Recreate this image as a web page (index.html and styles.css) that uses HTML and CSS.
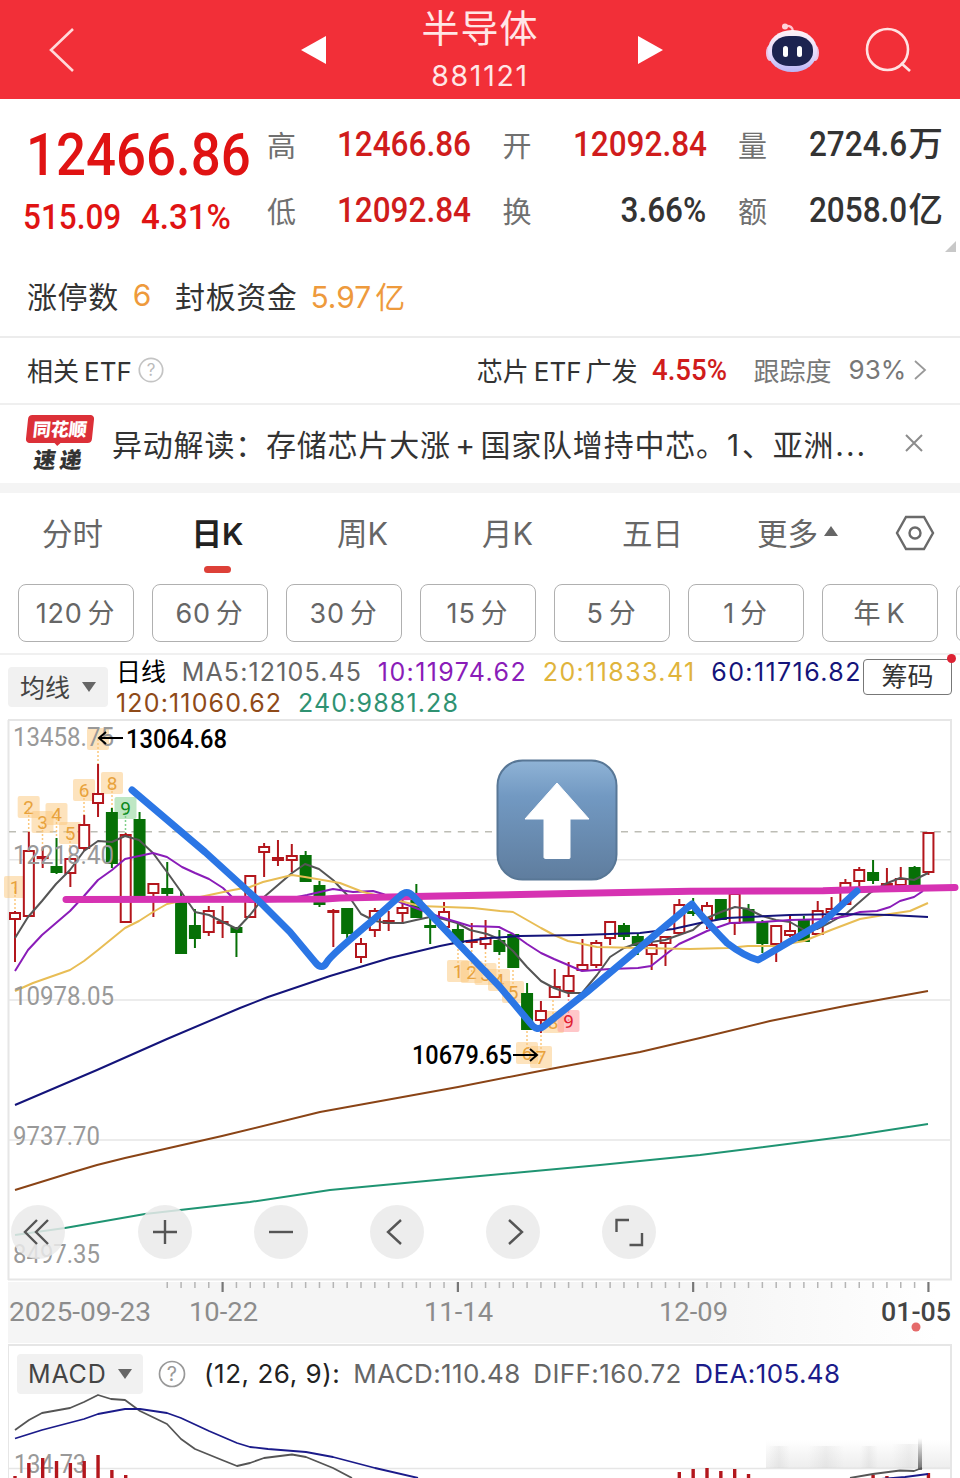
FILE: index.html
```html
<!DOCTYPE html>
<html lang="zh-CN">
<head>
    <meta charset="UTF-8">
    <meta name="viewport" content="width=device-width, initial-scale=1.0">
    <title>半导体 881121</title>
    <link rel="stylesheet" href="styles.css">
</head>
<body>
    <header class="topbar">
        <svg class="back" width="26" height="50" viewBox="0 0 26 50"><path d="M24 4 2 25l22 21" fill="none" stroke="#ffd9d9" stroke-width="2.6"/></svg>
        <svg class="prev" width="26" height="30" viewBox="0 0 26 30"><path d="M1 15 26 1v28z" fill="#fff"/></svg>
        <div class="title">
            <div class="name">半导体</div>
            <div class="code">881121</div>
        </div>
        <svg class="next" width="30" height="30" viewBox="0 0 30 30"><path d="M29 15 4 1v28z" fill="#fff"/></svg>
        <svg class="robot" width="56" height="52" viewBox="0 0 56 52">
            <defs>
                <linearGradient id="shell" x1="0" y1="0" x2="0" y2="1">
                    <stop offset="0" stop-color="#fff3f6"/>
                    <stop offset=".6" stop-color="#e3d8fb"/>
                    <stop offset="1" stop-color="#b9b6f5"/>
                </linearGradient>
            </defs>
            <path d="M20 4q8-1 8 6" fill="none" stroke="#ffc4cf" stroke-width="2.4"/>
            <circle cx="20" cy="4.500" r="3" fill="#ffd3da"/>
            <ellipse cx="5" cy="31" rx="4" ry="8" fill="#ecc5e6"/>
            <ellipse cx="50" cy="31" rx="4" ry="8" fill="#ecc5e6"/>
            <rect x="3" y="8" width="49" height="42" rx="24" ry="20" fill="url(#shell)"/>
            <rect x="7" y="14" width="41" height="30" rx="17" ry="14" fill="#1c2350"/>
            <rect x="18" y="24" width="5" height="11" rx="2.500" fill="#fff"/>
            <rect x="32" y="24" width="5" height="11" rx="2.500" fill="#fff"/>
        </svg>
        <svg class="search" width="48" height="48" viewBox="0 0 48 48"><g fill="none" stroke="#ffe2e2" stroke-width="2.6"><circle cx="22.500" cy="23.500" r="20.500"/><path d="m36 37 9 8"/></g></svg>
    </header>

    <section class="quote">
        <div class="last">
            <div class="price"><span>12466.86</span></div>
            <div class="change"><span>515.09</span><span>4.31%</span></div>
        </div>
        <dl class="stats">
            <div><dt>高</dt><dd class="red"><span>12466.86</span></dd></div>
            <div><dt>开</dt><dd class="red"><span>12092.84</span></dd></div>
            <div><dt>量</dt><dd><span>2724.6</span><b>万</b></dd></div>
            <div><dt>低</dt><dd class="red"><span>12092.84</span></dd></div>
            <div><dt>换</dt><dd><span>3.66%</span></dd></div>
            <div><dt>额</dt><dd><span>2058.0</span><b>亿</b></dd></div>
        </dl>
        <svg class="corner" width="11" height="11" viewBox="0 0 11 11"><path d="M11 0v11H0z" fill="#c8c8c8"/></svg>
    </section>

    <section class="limit">
        <span>涨停数</span><em class="count">6</em><span>封板资金</span><em class="fund">5.97<i>亿</i></em>
    </section>

    <section class="etf">
        <span>相关<i>ETF</i></span>
        <svg class="help" width="26" height="26" viewBox="0 0 26 26"><circle cx="13" cy="13" r="11.700" fill="none" stroke="#c4c4c4" stroke-width="1.700"/><text x="13" y="19" text-anchor="middle">?</text></svg>
        <span class="etf-name">芯片<i>ETF</i>广发</span>
        <span class="etf-pct"><span>4.55%</span></span>
        <span class="etf-track">跟踪度</span>
        <span class="etf-deg">93%</span>
        <svg width="16" height="20" viewBox="0 0 16 20"><path d="m3 1 10 9-10 9" fill="none" stroke="#999" stroke-width="1.800"/></svg>
    </section>

    <section class="news">
        <div class="logo">
            <div class="logo-top">同花顺</div>
            <div class="logo-bottom">速递</div>
        </div>
        <p>异动解读：存储芯片大涨<i>+</i>国家队增持中芯。<i class="num">1</i>、亚洲<i class="dots">...</i></p>
        <svg width="18" height="18" viewBox="0 0 18 18"><path d="m1 1 16 16M17 1 1 17" stroke="#8c8c8c" stroke-width="2"/></svg>
    </section>

    <nav class="tabs">
        <a>分时</a>
        <a class="active">日K</a>
        <a>周K</a>
        <a>月K</a>
        <a>五日</a>
        <a>更多<svg width="14" height="10" viewBox="0 0 14 10"><path d="M7 0l7 10H0z" fill="#666"/></svg></a>
        <svg class="gear" width="40" height="36" viewBox="0 0 40 36"><g fill="none" stroke="#6a6a6a" stroke-width="2.400"><path d="M11 2h18l9 16-9 16H11L2 18z"/><circle cx="20" cy="18" r="5.500"/></g></svg>
    </nav>

    <div class="periods">
        <span>120<i>分</i></span>
        <span>60<i>分</i></span>
        <span>30<i>分</i></span>
        <span>15<i>分</i></span>
        <span>5<i>分</i></span>
        <span>1<i>分</i></span>
        <span><i class="year">年</i>K</span>
        <span></span>
    </div>

    <section class="legend">
        <div class="picker">均线<svg width="14" height="10" viewBox="0 0 14 10"><path d="M0 0h14L7 10z" fill="#666"/></svg></div>
        <div class="averages">
            <div><span class="day">日线</span><span class="ma5">MA5:12105.45</span><span class="ma10">10:11974.62</span><span class="ma20">20:11833.41</span><span class="ma60">60:11716.82</span></div>
            <div><span class="ma120">120:11060.62</span><span class="ma240">240:9881.28</span></div>
        </div>
        <div class="chips">筹码</div>
    </section>

    <section class="kline">
        <svg id="kline" width="960" height="563" viewBox="0 719 960 563">
            <defs>
                <linearGradient id="key" x1="0" y1="0" x2="0" y2="1">
                    <stop offset="0" stop-color="#8fb3d6"/>
                    <stop offset=".3" stop-color="#7299c2"/>
                    <stop offset="1" stop-color="#5f7d9e"/>
                </linearGradient>
            </defs>
            <g fill="none" stroke="#e6e6e6" stroke-width="2">
                <path d="M8 720H952M8 1279.500H952M8.500 720v560M951 720v560"/>
                <path d="M9 859.700H951M9 1000H951M9 1140H951" stroke-width="1.500"/>
            </g>
            <path d="M9 831.700H951" stroke="#bdbdb5" stroke-width="1.500" stroke-dasharray="7 6.600"/>
            <g id="badges"></g>
            <g id="candles"></g>
            <g id="averages" fill="none" stroke-width="2" stroke-linejoin="round"></g>
            <g class="scale">
                <text x="13" y="746" textLength="101" lengthAdjust="spacingAndGlyphs">13458.75</text>
                <text x="13" y="864" textLength="101" lengthAdjust="spacingAndGlyphs">12218.40</text>
                <text x="13" y="1004.500" textLength="101" lengthAdjust="spacingAndGlyphs">10978.05</text>
                <text x="13" y="1144.500" textLength="87" lengthAdjust="spacingAndGlyphs">9737.70</text>
                <text x="13" y="1262.500" textLength="87" lengthAdjust="spacingAndGlyphs">8497.35</text>
            </g>
            <g class="mark">
                <text x="126" y="747.500" textLength="101" lengthAdjust="spacingAndGlyphs">13064.68</text>
                <text x="412" y="1064" textLength="100" lengthAdjust="spacingAndGlyphs">10679.65</text>
                <path d="M123 738H99m7-6-7 6 7 6M513 1055h24m-7-6 7 6-7 6" fill="none" stroke="#000" stroke-width="2"/>
            </g>
            <g fill="none" stroke-width="7" stroke-linecap="round" stroke-linejoin="round">
                <path stroke="#d632b2" d="M66 899.500L325 899L340 898L440 896L570 893.500L690 891.300L823 890.800L880 889L955 887.500"/>
                <path stroke="#2b76e5" d="M132 790L205 852L260 902L290 932L315 962Q322 971 327 962Q331 955 373 920L400 896Q407 889 413 896L453 938L500 987L531 1024Q537 1032 544 1026L587 992L687 908L692 904Q700 915 727 943Q744 956 758 960Q767 955 823 922L857 891"/>
            </g>
            <rect x="497.500" y="760.500" width="119" height="119" rx="25" fill="url(#key)" stroke="#587796" stroke-width="2"/>
            <path d="M557 783l32 36h-19v38.500q0 1-1 1h-23q-2 0-2-1V819h-19z" fill="#fff" stroke="#fff" stroke-linejoin="round"/>
        </svg>
        <div class="tools">
            <span><svg viewBox="0 0 54 54"><path d="M26 15 14 27l12 12M37 15 25 27l12 12"/></svg></span>
            <span><svg viewBox="0 0 54 54"><path d="M27 15v24M15 27h24"/></svg></span>
            <span><svg viewBox="0 0 54 54"><path d="M15 27h24"/></svg></span>
            <span><svg viewBox="0 0 54 54"><path d="M31 15 18 27l13 12"/></svg></span>
            <span><svg viewBox="0 0 54 54"><path d="M23 15l13 12-13 12"/></svg></span>
            <span><svg viewBox="0 0 54 54"><path d="M14.500 27V15H27M40 28v12H27.500"/></svg></span>
        </div>
    </section>

    <section class="dates">
        <svg id="dates" width="952" height="60" viewBox="8 1282 952 60">
            <g id="ticks"></g>
            <text x="9" y="1320.500" textLength="142" lengthAdjust="spacingAndGlyphs">2025-09-23</text>
            <text x="189" y="1320.500" textLength="69" lengthAdjust="spacingAndGlyphs">10-22</text>
            <text x="424" y="1320.500" textLength="69" lengthAdjust="spacingAndGlyphs">11-14</text>
            <text x="659" y="1320.500" textLength="69" lengthAdjust="spacingAndGlyphs">12-09</text>
            <text x="881" y="1320.500" textLength="70" lengthAdjust="spacingAndGlyphs" class="today">01-05</text>
            <circle cx="916" cy="1327" r="4.500" fill="#e56a6a"/>
        </svg>
    </section>

    <section class="macd">
        <div class="macd-head">
            <div class="picker">MACD<svg width="14" height="10" viewBox="0 0 14 10"><path d="M0 0h14L7 10z" fill="#666"/></svg></div>
            <svg class="help" width="28" height="28" viewBox="0 0 28 28"><circle cx="14" cy="14" r="12.500" fill="none" stroke="#999" stroke-width="1.700"/><text x="14" y="21" text-anchor="middle">?</text></svg>
            <span class="args">(12, 26, 9):</span>
            <span class="m1">MACD:110.48</span>
            <span class="m2">DIFF:160.72</span>
            <span class="m3">DEA:105.48</span>
        </div>
        <svg id="macd" width="942" height="84" viewBox="9 1394 942 84">
            <defs>
                <linearGradient id="fade" x1="0" y1="0" x2="0" y2="1">
                    <stop offset="0" stop-color="#888" stop-opacity="0"/>
                    <stop offset="1" stop-color="#888" stop-opacity=".3"/>
                </linearGradient>
                <linearGradient id="side" x1="0" y1="0" x2="1" y2="0">
                    <stop offset="0" stop-color="#888" stop-opacity="0"/>
                    <stop offset=".5" stop-color="#888" stop-opacity=".1"/>
                    <stop offset="1" stop-color="#888" stop-opacity="0"/>
                </linearGradient>
                <linearGradient id="streak" x1="0" y1="0" x2="0" y2="1">
                    <stop offset="0" stop-color="#444" stop-opacity="0"/>
                    <stop offset="1" stop-color="#444" stop-opacity=".75"/>
                </linearGradient>
            </defs>
            <path d="M9 1468.500H951" stroke="#e6e6e6" stroke-width="1.500"/>
            <rect x="766" y="1440" width="184" height="28" fill="url(#fade)" opacity=".5"/>
            <g fill="url(#side)">
                <rect x="768" y="1446" width="22" height="22"/>
                <rect x="808" y="1446" width="36" height="22"/>
                <rect x="860" y="1446" width="18" height="22"/>
                <rect x="892" y="1444" width="34" height="24"/>
            </g>
            <rect x="918" y="1438" width="4" height="32" fill="url(#streak)"/>
            <text x="14" y="1472.500" textLength="72" lengthAdjust="spacingAndGlyphs">134.73</text>
            <g id="bars"></g>
            <g fill="none" stroke-width="1.800" stroke-linejoin="round">
                <path stroke="#555" d="M15 1430L29 1420L42 1413L70 1408L84 1402L98 1395L111 1399L125 1400L140 1411L167 1424L181 1439L195 1449L222 1460L237 1466L250 1463L264 1458L292 1454.500L306 1457L333 1468L352 1478"/>
                <path stroke="#1b1b8a" d="M15 1438.500L42 1430L84 1419L98 1414L125 1409L140 1409L167 1413L181 1418L209 1431L237 1443L250 1447L268 1449L306 1452L333 1457L375 1468L418 1478"/>
                <path stroke="#555" d="M850 1478L873 1474L900 1470.500L914 1471L922 1468"/>
                <path stroke="#1b1b8a" d="M880 1479L905 1477L928 1474"/>
            </g>
        </svg>
    </section>

    <script src="chart.js"></script>
</body>
</html>
```
FILE: styles.css
```css
* {
    box-sizing: border-box;
}
body {
    margin: 0;
    width: 960px;
    height: 1478px;
    overflow: hidden;
    background: #fff;
    color: #333;
    font-family: Inter, "Noto Sans CJK SC", sans-serif;
}
svg {
    display: block;
    flex: none;
}
i, em {
    font-style: normal;
}
.topbar {
    display: flex;
    align-items: center;
    height: 99px;
    padding-left: 49px;
    background: #f22f38;
    color: #ffe6e6;
}
.prev {
    margin-left: 225px;
}
.title {
    width: 308px;
    text-align: center;
}
.name {
    font-size: 38px;
    line-height: 48px;
    letter-spacing: 1px;
    margin-top: 4px;
    font-weight: 400;
}
.code {
    font-size: 28.500px;
    line-height: 48px;
    letter-spacing: 1.7px;
}
.robot {
    margin: -3px 44px 0 101px;
}

/* quote */
.quote {
    position: relative;
    display: flex;
    height: 155px;
    font-family: Roboto, "Noto Sans CJK SC", sans-serif;
    font-weight: 500;
}
.last {
    width: 267px;
    color: #e01313;
}
.price {
    font-size: 60px;
    line-height: 60px;
    margin: 26px 0 0 26px;
}
.price span,
.change span,
.stats dd span,
.etf-pct span {
    display: inline-block;
    transform: scaleX(.9);
    transform-origin: left;
    white-space: nowrap;
}
.price span {
    transform: scaleX(.88);
}
.change {
    display: flex;
    font-size: 35px;
    line-height: 40px;
    margin: 13px 0 0 23px;
}
.change span + span {
    margin-left: 9px;
    transform: scaleX(.945);
}
.stats {
    display: grid;
    grid-template-columns: repeat(3, 204px);
    grid-auto-rows: 66px;
    column-gap: 31.500px;
    margin: 12px 0 0;
}
.stats div {
    display: flex;
    align-items: center;
    justify-content: space-between;
}
.stats dt {
    padding-bottom: 1px;
    font-size: 29px;
    font-weight: 400;
    color: #707070;
}
.stats dd {
    display: flex;
    align-items: center;
    margin: 0;
    font-size: 35px;
}
.stats dd span {
    transform-origin: right;
}
.stats b {
    margin-right: -1px;
    font-size: 34.500px;
    font-weight: 500;
    line-height: 40px;
}
.stats b::before {
    content: "";
    margin-left: 1px;
}
.red {
    color: #d01c1c;
}
.corner {
    position: absolute;
    right: 4px;
    bottom: 2px;
}

/* info rows */
.limit {
    display: flex;
    align-items: center;
    height: 84px;
    padding-left: 27px;
    border-bottom: 2px solid #ececec;
    font-size: 30px;
    letter-spacing: .6px;
}
.limit em {
    color: #ee9a3c;
}
.count {
    margin: 0 23px 0 14px;
}
.fund {
    margin-left: 13px;
    letter-spacing: 0;
}
.fund i {
    margin-left: 4px;
}
.etf {
    display: flex;
    align-items: center;
    height: 67px;
    padding: 0 0 2px 27px;
    border-bottom: 2px solid #efefef;
    font-size: 26px;
}
.etf i {
    margin-left: 5px;
}
.help {
    margin-left: 6px;
}
.help text {
    font-size: 17px;
    fill: #bbb;
}
.etf-name {
    margin-left: 313px;
}
.etf-name i {
    margin-right: 4px;
}
.etf-pct {
    width: 75px;
    margin-left: 14px;
    font: 500 30px Roboto, sans-serif;
    color: #d01c1c;
}
.etf-pct span {
    transform: scaleX(.92);
}
.etf-track {
    margin-left: 27px;
    color: #777;
}
.etf-deg {
    margin: 0 6px 0 17px;
    color: #777;
}
.news {
    display: flex;
    align-items: center;
    height: 88px;
    padding: 0 0 3px 27px;
    border-bottom: 10px solid #f4f4f4;
}
.logo {
    width: 66px;
    height: 55px;
    text-align: center;
    font-weight: 900;
}
.logo-top {
    position: relative;
    height: 28px;
    line-height: 29px;
    border-radius: 4px;
    background: #dc3038;
    color: #fff;
    font-size: 18px;
    transform: skewX(-6deg);
}
.logo-top::after {
    content: "";
    position: absolute;
    left: 28px;
    top: 27px;
    border: 4px solid transparent;
    border-top-color: #dc3038;
    border-bottom: 0;
}
.logo-bottom {
    padding-top: 3px;
    font-size: 22px;
    line-height: 29px;
    letter-spacing: 4px;
    transform: skewX(-8deg);
}
.news p {
    width: 753px;
    margin: 0 40px 0 19px;
    font-size: 30px;
    letter-spacing: .8px;
    white-space: nowrap;
}
.news p i {
    margin: 0 4.500px;
}
.news .num {
    margin: 0 2px 0 0;
}
.news .dots {
    margin: 0 0 0 1px;
    letter-spacing: 2px;
}
.news svg {
    margin-top: 1px;
}

/* tabs */
.tabs {
    display: flex;
    align-items: center;
    height: 91px;
    padding-bottom: 14px;
    font-size: 30.500px;
    color: #666;
}
.tabs a {
    position: relative;
    display: flex;
    align-items: center;
    justify-content: center;
    width: 145px;
}
.tabs a svg {
    margin: -1px 0 0 6px;
}
.tabs .active {
    color: #222;
    font-weight: 600;
}
.tabs .active::after {
    content: "";
    position: absolute;
    left: 59px;
    bottom: -19px;
    width: 27px;
    height: 7px;
    border-radius: 4px;
    background: #dd4038;
}
.gear {
    margin: 2px 0 0 25px;
}
.periods {
    display: flex;
    gap: 18px;
    height: 71px;
    padding-left: 17.500px;
    border-bottom: 2px solid #f0f0f0;
    overflow: hidden;
}
.periods span {
    flex: none;
    width: 116px;
    height: 58px;
    border: 1.500px solid #b0b0b0;
    border-radius: 8px;
    line-height: 58px;
    text-align: center;
    font-size: 27px;
    letter-spacing: .8px;
    color: #666;
}
.periods i {
    margin-left: 5px;
}
.periods .year {
    margin: 0 5px 0 0;
}

/* averages legend */
.legend {
    position: relative;
    display: flex;
    height: 64px;
    padding-left: 8px;
}
.picker {
    display: flex;
    align-items: center;
    flex: none;
    width: 100px;
    height: 40px;
    margin-top: 12px;
    padding: 0 0 3px 12px;
    border-radius: 4px;
    background: #f1f1f1;
    font-size: 25px;
    color: #444;
}
.picker svg {
    margin: 2px 0 0 12px;
}
.averages {
    margin: 2px 0 0 8px;
    font-size: 25px;
    line-height: 31px;
    letter-spacing: 1.4px;
    white-space: nowrap;
}
.averages div {
    display: flex;
}
.averages span + span {
    margin-left: 15.700px;
}
.averages .day {
    color: #000;
    letter-spacing: 0;
}
.averages .ma5,
.averages .ma120,
.averages .ma240 {
    letter-spacing: 1.150px;
}
.ma5 { color: #666; }
.ma10 { color: #8a1cb8; }
.ma20 { color: #e0b43c; }
.ma60 { color: #14147a; }
.ma120 { color: #8f4a18; }
.ma240 { color: #2f9272; }
.chips {
    position: absolute;
    left: 863px;
    top: 4px;
    width: 89px;
    height: 36px;
    border: 1.500px solid #777;
    border-radius: 4px;
    line-height: 34px;
    text-align: center;
    font-size: 26px;
}
.chips::after {
    content: "";
    position: absolute;
    right: -5px;
    top: -6px;
    width: 9px;
    height: 9px;
    border-radius: 50%;
    background: #dd2233;
}

/* chart */
.kline {
    position: relative;
    height: 563px;
}
.scale text,
.mark text,
.badge text,
.dates text,
#macd text {
    font-family: Roboto, sans-serif;
}
.scale text {
    font-size: 26px;
    fill: #999;
}
.mark text {
    font-size: 26px;
    font-weight: 500;
    fill: #000;
}
.badge text {
    font-size: 19px;
    text-anchor: middle;
}
.tools {
    position: absolute;
    left: 11px;
    top: 486px;
    display: flex;
    gap: 62px;
}
.tools span {
    width: 54px;
    height: 54px;
    border-radius: 50%;
    background: rgba(234, 234, 234, .85);
}
.tools span:first-child {
    margin-right: 11px;
}
.tools path {
    fill: none;
    stroke: #555;
    stroke-width: 2.4;
}
.dates {
    height: 61px;
    margin-left: 8px;
    background: linear-gradient(90deg, #f5f5f5 0 700px, #fff 930px);
}
.dates text {
    font-size: 26px;
    fill: #8c8c8c;
}
.dates .today {
    fill: #444;
    font-weight: 500;
}

/* macd */
.macd {
    width: 944px;
    height: 136px;
    margin-left: 8px;
    margin-top: 1px;
    border: 2px solid #e6e6e6;
    border-width: 2px 2px 0 1px;
    overflow: hidden;
}
.macd-head {
    display: flex;
    align-items: center;
    height: 48px;
    font-size: 26px;
    letter-spacing: .4px;
    padding-top: 7px;
    white-space: nowrap;
}
.macd-head .picker {
    width: 126px;
    margin: 0 15px 0 8px;
    padding: 0 0 0 11px;
    letter-spacing: .8px;
}
.macd-head .picker svg {
    margin-top: 0;
}
.macd-head .help {
    margin: 0;
}
.macd-head .help text {
    font-size: 20px;
    fill: #999;
}
.args {
    margin-left: 18px;
    letter-spacing: .55px;
    color: #222;
}
.m1, .m2 { color: #666; }
.m1 { margin-left: 13px; }
.m2, .m3 { margin-left: 12.500px; }
.m3 { color: #1b1b8a; }
#macd text {
    font-size: 26px;
    fill: #999;
}
```
FILE: chart.js
```js
const NS = 'http://www.w3.org/2000/svg';
const START = 15;
const STEP = 13.84;

// type, wick top, body top, body bottom, wick bottom
const candles = [
    ['r', 911, 912, 920, 962], ['r', 832, 850, 917, 917], ['r', 847, 856, 858, 868], ['g', 838, 866, 873, 874],
    ['r', 858, 858, 874, 887], ['r', 815, 824, 849, 851], ['r', 764, 793, 804, 817], ['g', 808, 812, 864, 868],
    ['r', 833, 834, 923, 923], ['g', 812, 819, 897, 897], ['r', 883, 883, 894, 917], ['g', 862, 888, 894, 897],
    ['g', 891, 900, 954, 954], ['g', 909, 925, 939, 948], ['r', 906, 910, 933, 936], ['r', 906, 921, 924, 938],
    ['g', 927, 927, 933, 957], ['r', 875, 875, 918, 918], ['r', 843, 846, 853, 877], ['r', 840, 857, 861, 866],
    ['r', 844, 855, 861, 872], ['g', 851, 855, 882, 882], ['g', 881, 885, 905, 907], ['r', 909, 910, 913, 947],
    ['g', 908, 908, 934, 938], ['r', 938, 943, 958, 963], ['r', 908, 910, 931, 937], ['r', 911, 920, 924, 931],
    ['r', 899, 907, 914, 924], ['g', 884, 898, 918, 918], ['g', 917, 925, 928, 944], ['r', 902, 911, 928, 930],
    ['g', 924, 929, 943, 943], ['r', 923, 940, 942, 948], ['r', 920, 937, 945, 949], ['g', 930, 940, 952, 955],
    ['g', 934, 934, 968, 968], ['g', 983, 993, 1030, 1030], ['r', 1001, 1010, 1021, 1033], ['r', 969, 986, 998, 998],
    ['r', 962, 975, 992, 997], ['r', 939, 964, 971, 971], ['r', 940, 942, 966, 968], ['r', 921, 921, 939, 945],
    ['g', 923, 925, 937, 940], ['g', 933, 936, 946, 955], ['r', 940, 944, 955, 970], ['r', 936, 936, 944, 966],
    ['r', 899, 904, 934, 934], ['g', 898, 911, 914, 916], ['r', 902, 905, 920, 929], ['g', 899, 899, 920, 920],
    ['r', 893, 893, 924, 935], ['g', 904, 909, 922, 922], ['g', 920, 922, 944, 953], ['r', 925, 925, 945, 962],
    ['r', 915, 930, 936, 937], ['g', 916, 920, 942, 942], ['r', 901, 910, 935, 935], ['r', 897, 908, 913, 920],
    ['r', 879, 882, 905, 905], ['r', 867, 869, 882, 887], ['g', 860, 872, 881, 884], ['r', 868, 883, 886, 886],
    ['r', 867, 878, 886, 886], ['g', 866, 867, 886, 886], ['r', 832, 832, 873, 875]
];

const averages = {
    '#555': '15,938 28,917 42,901 56,884 70,870 84,851 98,841 112,842 125,836 139,840 153,853 167,872 182,893 195,912 209,915 223,922 237,929 250,915 264,897 278,885 292,873 305,864 319,869 333,880 350,898 361,914 375,921 388,923 403,923 416,920 430,917 443,919 457,923 470,930 487,934 499,939 513,951 527,967 541,981 554,988 568,993 582,993 597,975 610,957 624,948 638,943 651,942 665,940 679,935 693,930 707,918 721,912 735,907 748,909 762,916 776,920 790,922 804,930 817,929 831,922 847,913 870,893 885,884 900,878 914,880 928,873',
    '#8a1cb8': '15,971 28,950 42,935 56,923 70,911 84,896 98,880 112,870 125,859 139,856 153,853 167,857 182,867 195,873 209,879 223,888 232,897 250,902 278,901 292,898 307,895 333,889 353,892 373,891 383,894 402,903 440,917 457,922 470,926 499,927 513,934 527,944 541,953 554,959 568,965 582,971 610,969 638,968 651,966 665,955 679,944 690,939 707,931 730,923 762,922 790,920 831,919 847,916 860,912 877,911 890,907 900,901 914,897 923,891',
    '#e8bd55': '15,991 33,983 70,970 84,961 98,950 125,928 139,921 153,912 167,904 200,897 233,890 250,887 263,882 292,875 305,877 340,883 363,892 400,901 420,906 473,908 500,911 513,912 527,920 541,928 554,935 568,941 597,947 640,948 690,949 727,948 748,946 776,946 804,941 831,930 860,919 890,914 910,911 928,903',
    '#14147a': '15,1105 97,1070 167,1039 240,1008 268,997 330,976 390,958 440,946 460,942 490,938 520,936 580,935 640,933 673,929 700,923 727,918 790,915 840,914 890,915 928,917',
    '#8a4416': '15,1190 70,1173 97,1165 125,1158 222,1136 320,1112 458,1087 545,1070 640,1052 700,1038 770,1021 845,1006 928,991',
    '#1f9472': '15,1235 65,1228 145,1214 250,1202 330,1190 458,1178 600,1165 700,1155 850,1136 928,1124'
};

// label, x, y, colour key, end of the dotted stem
const badges = [
    [1, 15, 887, 'o', 912], [2, 28.7, 807, 'o', 832], [3, 42.5, 822, 'o', 847], [4, 56.5, 814, 'o', 838],
    [5, 70, 833, 'o', 858], [6, 84, 790, 'o', 815], ['', 98, 739, 'o', 764], [8, 112, 783, 'o', 808], [9, 125.5, 808, 'g', 833],
    [1, 458, 971, 'o', 944], [2, 471.7, 972, 'o', 948], [3, 485.5, 974, 'o', 949], [4, 499, 980, 'o', 956],
    [5, 513, 992, 'o', 968], [6, 527, 1053, 'o', 1030], [7, 541, 1057, 'o', 1034], [8, 553, 1022, 'o', 998],
    [9, 568.5, 1021, 'r', 998]
];
const badgeColors = {
    o: ['#fbc77c', '#e8a23c'],
    g: ['#7fd08a', '#0c8a1c'],
    r: ['#ff8f94', '#e02030']
};

function add(parent, name, attrs, text) {
    const el = document.createElementNS(NS, name);
    for (const key in attrs) el.setAttribute(key, attrs[key]);
    if (text !== undefined) el.textContent = text;
    parent.appendChild(el);
    return el;
}

const candleGroup = document.getElementById('candles');
candles.forEach(([type, high, top, bottom, low], i) => {
    const x = START + i * STEP;
    const color = type === 'r' ? '#b3161c' : '#067006';
    add(candleGroup, 'path', { d: `M${x} ${high}V${top}M${x} ${bottom}V${low}`, stroke: color, 'stroke-width': 2 });
    const inset = type === 'r' ? 1 : 0;
    add(candleGroup, 'rect', {
        x: x - 6 + inset, y: top + inset,
        width: 12 - inset * 2, height: Math.max(bottom - top - inset * 2, 1),
        fill: type === 'r' ? '#fff' : color, stroke: color, 'stroke-width': type === 'r' ? 2 : 0
    });
});

const lineGroup = document.getElementById('averages');
for (const color in averages) {
    add(lineGroup, 'polyline', { points: averages[color], stroke: color });
}

const badgeGroup = document.getElementById('badges');
badges.forEach(([label, x, y, kind, stem]) => {
    const [fill, ink] = badgeColors[kind];
    const g = add(badgeGroup, 'g', { class: 'badge' });
    add(g, 'path', { d: `M${x} ${y}V${stem}`, stroke: fill, 'stroke-width': 1.5, 'stroke-dasharray': '2 2' });
    add(g, 'rect', { x: x - 11, y: y - 11, width: 22, height: 22, rx: 2, fill, opacity: 0.5 });
    add(g, 'text', { x, y: y + 7, fill: ink }, label);
});

const tickGroup = document.getElementById('ticks');
for (let i = 11; i < candles.length; i++) {
    const major = (i - 15) % 17 === 0;
    const x = START + i * STEP;
    add(tickGroup, 'path', {
        d: `M${x} 1282v${major ? 10 : 6}`,
        stroke: major ? '#777' : '#b5b5b5',
        'stroke-width': major ? 2.2 : 1.5
    });
}

const barGroup = document.getElementById('bars');
const bars = { 0: 1476, 1: 1463, 2: 1458, 3: 1461, 4: 1463, 5: 1461, 6: 1455, 7: 1470, 8: 1475,
    48: 1472, 49: 1469, 50: 1468, 51: 1471, 52: 1469, 53: 1474, 62: 1475, 63: 1476, 66: 1473 };
for (const i in bars) {
    const x = START + i * STEP;
    add(barGroup, 'path', { d: `M${x} ${bars[i]}V1478`, stroke: '#b3161c', 'stroke-width': 3.4 });
}
```
